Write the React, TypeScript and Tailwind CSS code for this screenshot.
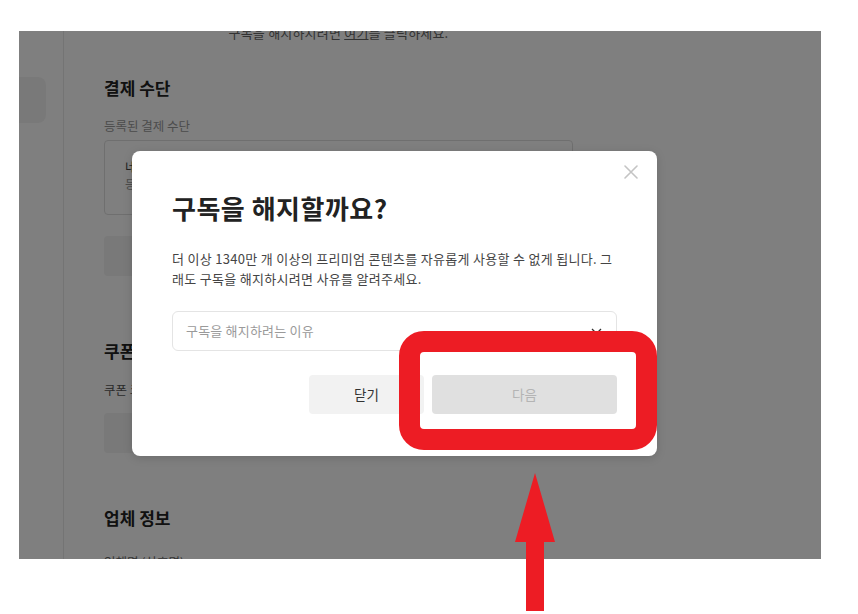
import React from "react";

export default function App() {
  return (
    <div className="relative w-[858px] h-[614px] bg-white overflow-hidden font-['Noto_Sans_CJK_KR','Noto_Sans',sans-serif]">
      {/* cropped page behind dim overlay */}
      <div className="pt-[31px] pl-[19px]">
        <div className="relative w-[802px] h-[528px] overflow-hidden bg-white flex items-start">
          <div className="w-[45px] h-full shrink-0 border-r border-[#e8e8e8] pt-[46px]">
            <div className="h-[46px] w-[27px] rounded-r-[8px] bg-[#f3f3f3]" />
          </div>
          <div className="pl-[40px] w-[509px] shrink-0">
            <p className="mt-[-8px] text-center text-[13px] leading-[20px] tracking-[0.2px] text-[#666]">
              구독을 해지하시려면 <span className="underline">여기</span>를 클릭하세요.
            </p>
            <h2 className="mt-[33px] text-[17px] leading-[24px] font-bold text-[#222]">결제 수단</h2>
            <p className="mt-[17px] text-[12.5px] leading-[18px] text-[#999]">등록된 결제 수단</p>
            <div className="mt-[5px] h-[75px] rounded-[4px] border border-[#dedede] pl-[20px] pt-[17px] text-[12.5px] leading-[17px] text-[#444]">
              <p>네이버페이</p>
              <p className="text-[#999]">등록일 2023.01.01</p>
            </div>
            <div className="mt-[21px] h-[40px] rounded-[4px] bg-[#f2f2f2]" />
            <h2 className="mt-[63px] text-[17px] leading-[24px] font-bold text-[#222]">쿠폰 등록</h2>
            <p className="mt-[18px] text-[12.5px] leading-[18px] text-[#555]">쿠폰 코드</p>
            <div className="mt-[14px] h-[40px] rounded-[4px] bg-[#f2f2f2]" />
            <h2 className="mt-[53px] text-[17px] leading-[24px] font-bold text-[#222]">업체 정보</h2>
            <p className="mt-[23px] text-[12.5px] leading-[18px] text-[#666]">업체명 (상호명)</p>
          </div>
          <div className="absolute inset-0 bg-black/50" />
        </div>
      </div>

      {/* modal */}
      <div className="absolute left-[132px] top-[151px] w-[525px] h-[305px] bg-white rounded-[8px] shadow-[0_2px_10px_rgba(0,0,0,0.15)] px-[40px] pt-[40px]">
        <button className="absolute right-[18px] top-[13px] w-[16px] h-[16px] flex items-center justify-center">
          <svg width="14" height="14" viewBox="0 0 14 14">
            <path d="M1 1L13 13M13 1L1 13" stroke="#c4c4c4" strokeWidth="1.6" strokeLinecap="round" />
          </svg>
        </button>
        <h1 className="text-[26px] leading-[34px] font-bold text-[#222] tracking-[0.5px]">구독을 해지할까요?</h1>
        <p className="mt-[24px] text-[13px] leading-[20px] tracking-[0.3px] text-[#444] break-all">
          더 이상 1340만 개 이상의 프리미엄 콘텐츠를 자유롭게 사용할 수 없게 됩니다. 그래도 구독을 해지하시려면 사유를 알려주세요.
        </p>
        <div className="mt-[22px] h-[40px] rounded-[6px] border border-[#e4e4e4] flex items-center justify-between pl-[13px] pr-[14px]">
          <span className="text-[13px] tracking-[0.2px] text-[#9a9a9a]">구독을 해지하려는 이유</span>
          <svg width="11" height="7" viewBox="0 0 11 7">
            <path d="M1 1L5.5 5.5L10 1" stroke="#333" strokeWidth="1.3" fill="none" />
          </svg>
        </div>
        <div className="mt-[24px] flex justify-end gap-[8px]">
          <button className="w-[115px] h-[39px] rounded-[4px] bg-[#f2f2f2] text-[13.5px] text-[#333]">닫기</button>
          <button className="w-[185px] h-[39px] rounded-[4px] bg-[#e0e0e0] text-[13.5px] text-[#b4b4b4]">다음</button>
        </div>
      </div>

      {/* red annotation box */}
      <div className="absolute left-[399px] top-[331px] w-[258px] h-[119px] rounded-[25px] border-[21px] border-[#ed1c24]" />

      {/* red arrow */}
      <svg className="absolute left-[505px] top-[470px]" width="60" height="144" viewBox="0 0 60 144">
        <polygon points="30,3 50,72 39,72 39,141 21,141 21,72 10,72" fill="#ed1c24" />
      </svg>
    </div>
  );
}
